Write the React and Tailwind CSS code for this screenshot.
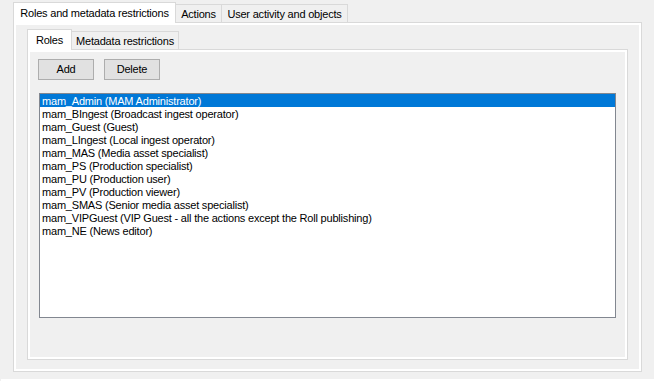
import React from 'react';

const roles = [
    'mam_Admin (MAM Administrator)',
    'mam_BIngest (Broadcast ingest operator)',
    'mam_Guest (Guest)',
    'mam_LIngest (Local ingest operator)',
    'mam_MAS (Media asset specialist)',
    'mam_PS (Production specialist)',
    'mam_PU (Production user)',
    'mam_PV (Production viewer)',
    'mam_SMAS (Senior media asset specialist)',
    'mam_VIPGuest (VIP Guest - all the actions except the Roll publishing)',
    'mam_NE (News editor)',
];

function Tab({ label, active, width }) {
    return active ? (
        <div
            className={`h-[21px] ${width} -mb-px relative z-10 flex items-center justify-center bg-white border border-b-0 border-[#d9d9d9] text-black`}
        >
            {label}
        </div>
    ) : (
        <div
            className={`h-[18px] ${width} flex items-center justify-center bg-[#f0f0f0] border border-b-0 border-l-0 border-[#d9d9d9] text-black pt-[1px]`}
        >
            {label}
        </div>
    );
}

function Button({ children }) {
    return (
        <button className="w-[56px] h-[21px] bg-[#e1e1e1] border border-[#adadad] text-black text-[11px] leading-none tracking-[-0.2px]">
            {children}
        </button>
    );
}

export default function App() {
    return (
        <div
            className="w-[654px] h-[381px] bg-[#f0f0f0] overflow-hidden flex flex-col text-[11px] leading-[13px] tracking-[-0.2px]"
            style={{ fontFamily: '"Liberation Sans", Arial, sans-serif' }}
        >
            <div className="pl-[13px] pt-[2px] flex flex-col">
                {/* outer tabs */}
                <div className="flex items-end h-[20px]">
                    <Tab label="Roles and metadata restrictions" active width="w-[163px]" />
                    <Tab label="Actions" width="w-[46px]" />
                    <Tab label="User activity and objects" width="w-[126px]" />
                </div>

                {/* outer panel */}
                <div className="w-[629px] h-[350px] border border-[#d9d9d9] bg-white p-[2px] flex">
                    <div className="flex-1 bg-[#f0f0f0] pl-[11px] pt-[3px] flex flex-col">
                        {/* inner tabs */}
                        <div className="flex items-end h-[21px]">
                            <Tab label="Roles" active width="w-[45px]" />
                            <Tab label="Metadata restrictions" width="w-[107px]" />
                        </div>

                        {/* inner panel */}
                        <div className="w-[601px] h-[311px] border border-[#d9d9d9] bg-white p-[2px] flex">
                            <div className="flex-1 bg-[#f0f0f0] pl-[8px] pt-[7px] flex flex-col">
                                <div className="flex gap-[10px]">
                                    <Button>Add</Button>
                                    <Button>Delete</Button>
                                </div>

                                {/* list box */}
                                <div className="mt-[13px] ml-[1px] w-[577px] h-[225px] border border-[#828790] bg-white">
                                    {roles.map((r, i) => (
                                        <div
                                            key={r}
                                            className={`h-[13px] leading-[15px] overflow-visible pl-[2px] whitespace-nowrap ${
                                                i === 0 ? 'bg-[#0078d7] text-white' : 'text-black'
                                            }`}
                                        >
                                            {r}
                                        </div>
                                    ))}
                                </div>
                            </div>
                        </div>
                    </div>
                </div>
            </div>
            <div className="mt-[7px] ml-[1px] h-[2px] bg-white" />
        </div>
    );
}
